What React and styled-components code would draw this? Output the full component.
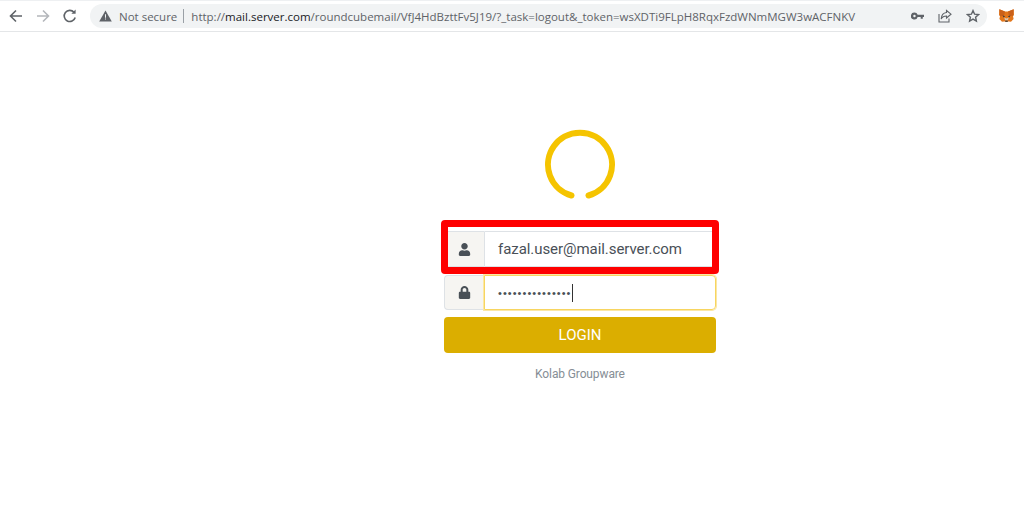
import React from "react";
import styled, { createGlobalStyle } from "styled-components";
import { FaUser, FaLock } from "react-icons/fa";

const Global = createGlobalStyle`
  html, body { margin: 0; padding: 0; background: #fff; }
  body { width: 1024px; height: 512px; overflow: hidden; font-family: Roboto, sans-serif; }
`;

const Toolbar = styled.div`
  height: 30px;
  display: flex;
  align-items: center;
  border-top: 1px solid #eef0f2;
  border-bottom: 1px solid #e4e6e8;
  background: #fff;
`;

const NavButtons = styled.div`
  display: flex;
  align-items: center;
  width: 90px;
  padding-left: 8px;
  gap: 11px;
  box-sizing: border-box;
`;

const Omnibox = styled.div`
  width: 897px;
  height: 24px;
  display: flex;
  align-items: center;
  background: #f1f3f4;
  border-radius: 12px;
  padding-left: 9px;
  box-sizing: border-box;
`;

const SecurityLabel = styled.span`
  font: 11.5px "Open Sans", sans-serif;
  color: #5f6368;
  margin-left: 7px;
`;

const Divider = styled.span`
  width: 1px;
  height: 14px;
  background: #9aa0a6;
  margin: 0 7px 0 6px;
`;

const Url = styled.span`
  font: 11.5px "Open Sans", sans-serif;
  color: #5f6368;
  white-space: nowrap;
  b { font-weight: 400; color: #202124; }
`;

const OmniActions = styled.div`
  margin-left: auto;
  display: flex;
  align-items: center;
  gap: 14px;
  padding-right: 7px;
`;

const Extension = styled.div`
  margin-left: 12px;
  display: flex;
`;

const Main = styled.main`
  display: flex;
  flex-direction: column;
  align-items: center;
  padding: 97px 0 0 136px;
`;

const Logo = styled.svg`
  display: block;
  margin-bottom: 30px;
`;

const LoginForm = styled.form`
  width: 272px;
  display: flex;
  flex-direction: column;
  position: relative;
`;

const InputRow = styled.div`
  display: flex;
  height: ${(p) => p.$h}px;
  margin-bottom: ${(p) => p.$mb}px;
`;

const Prepend = styled.div`
  width: 40px;
  display: flex;
  align-items: center;
  justify-content: center;
  background: #f6f5f2;
  border: 1px solid #dee2e6;
  border-right: none;
  border-radius: 4px 0 0 4px;
  box-sizing: border-box;
  color: #495057;
  font-size: 13px;
`;

const Field = styled.div`
  flex: 1;
  display: flex;
  align-items: center;
  padding-left: 13px;
  box-sizing: border-box;
  border: 1px solid ${(p) => (p.$focus ? "#f7d560" : "#dee2e6")};
  box-shadow: ${(p) => (p.$focus ? "0 0 0 1px #fbe7a4" : "none")};
  border-radius: 0 4px 4px 0;
  font-size: 15px;
  letter-spacing: -0.06px;
  color: #495057;
`;

const Dots = styled.span`
  font: 11px "Liberation Sans", sans-serif;
  letter-spacing: 1.05px;
  color: #495057;
`;

const Caret = styled.span`
  width: 1px;
  height: 18px;
  background: #333;
`;

const Highlight = styled.div`
  position: absolute;
  left: -3px;
  top: -11px;
  width: 278px;
  height: 54px;
  border: 7px solid #fe0000;
  border-radius: 4px;
  box-sizing: border-box;
  pointer-events: none;
`;

const LoginButton = styled.button`
  height: 36px;
  border: none;
  border-radius: 4px;
  background: #dbae00;
  color: #fff;
  font: 400 15px Roboto, sans-serif;
  padding: 0;
`;

const Footer = styled.div`
  margin-top: 14px;
  font-size: 12px;
  letter-spacing: -0.12px;
  line-height: 14px;
  color: #868e96;
`;

export default function App() {
  return (
    <>
      <Global />
      <Toolbar>
        <NavButtons>
          <svg width="16" height="16" viewBox="0 0 16 16" fill="none" stroke="#5f6368" strokeWidth="1.6">
            <path d="M14 8H3M8 2.5 2.5 8 8 13.5" />
          </svg>
          <svg width="16" height="16" viewBox="0 0 16 16" fill="none" stroke="#b4b7bb" strokeWidth="1.6">
            <path d="M2 8h11M8 2.5 13.5 8 8 13.5" />
          </svg>
          <svg width="16" height="16" viewBox="0 0 16 16" fill="none" stroke="#5f6368" strokeWidth="1.6">
            <path d="M13.2 9.5A5.6 5.6 0 1 1 12 4.2" />
            <path d="M13.6 1.6v4.2H9.4z" fill="#5f6368" stroke="none" />
          </svg>
        </NavButtons>
        <Omnibox>
          <svg width="13" height="12" viewBox="0 0 13 12">
            <path d="M6.5 0.5 12.8 11.5H0.2z" fill="#5f6368" />
            <path d="M6 4.2h1v3.6H6zM6 8.6h1v1H6z" fill="#f1f3f4" />
          </svg>
          <SecurityLabel>Not secure</SecurityLabel>
          <Divider />
          <Url>
            http://<b>mail.server.com</b>/roundcubemail/VfJ4HdBzttFv5J19/?_task=logout&amp;_token=wsXDTi9FLpH8RqxFzdWNmMGW3wACFNKV
          </Url>
          <OmniActions>
            <svg width="13" height="9" viewBox="0 0 15 10" fill="#5f6368">
              <path d="M4 0.5a4 4 0 0 1 3.7 2.6H15v2.4h-1.4v2h-2.4v-2H7.7A4 4 0 1 1 4 .5zm0 2.6a1.4 1.4 0 1 0 0 2.8 1.4 1.4 0 0 0 0-2.8z" />
            </svg>
            <svg width="14" height="14" viewBox="0 0 14 14" fill="none" stroke="#5f6368" strokeWidth="1.1">
              <path d="M1 5v8h10V9.5" />
              <path d="M8.5 1.5 13 5.2 8.5 9V7C6 7 4.2 8 3.2 10 3.4 6.5 5.5 3.9 8.5 3.5z" />
            </svg>
            <svg width="14" height="14" viewBox="0 0 14 14" fill="none" stroke="#5f6368" strokeWidth="1.4">
              <path d="M7 1.6 8.6 5.2l3.9.4-2.9 2.6.8 3.9L7 10.1l-3.4 2 .8-3.9-2.9-2.6 3.9-.4z" />
            </svg>
          </OmniActions>
        </Omnibox>
        <Extension>
          <svg width="15" height="14" viewBox="0 0 15 14">
            <path d="M0.3 0.3 6 2.6h3L14.7 0.3 15 6l-1 1.2.6 2.8-2.6 2.8-2.2-.4H5.2l-2.2.4L.4 10 1 7.2 0 6z" fill="#e2761b" />
            <path d="M0.3 0.3 6 2.6 5 7 1 7.2zM14.7.3 9 2.6 10 7l4-.2z" fill="#c9601a" />
            <path d="M5.2 8.6 6.2 11.6h2.6l1-3-2.3.8z" fill="#d8c4b0" />
            <path d="M3.6 6.6 6 7.2 4.8 8.4zM11.4 6.6 9 7.2l1.2 1.2z" fill="#233447" />
            <path d="M6.2 11.6h2.6v1.2H6.2z" fill="#3a2a1c" />
          </svg>
        </Extension>
      </Toolbar>
      <Main>
        <Logo width="72" height="72" viewBox="0 0 72 72">
          <path d="M27.5 66.5A32 32 0 1 1 44.5 66.5" fill="none" stroke="#f5c400" strokeWidth="6" strokeLinecap="round" />
        </Logo>
        <LoginForm>
          <InputRow $h={36} $mb={8}>
            <Prepend><FaUser /></Prepend>
            <Field>fazal.user@mail.server.com</Field>
          </InputRow>
          <InputRow $h={35} $mb={7}>
            <Prepend><FaLock /></Prepend>
            <Field $focus>
              <Dots>•••••••••••••••</Dots>
              <Caret />
            </Field>
          </InputRow>
          <LoginButton type="button">LOGIN</LoginButton>
          <Highlight />
        </LoginForm>
        <Footer>Kolab Groupware</Footer>
      </Main>
    </>
  );
}
